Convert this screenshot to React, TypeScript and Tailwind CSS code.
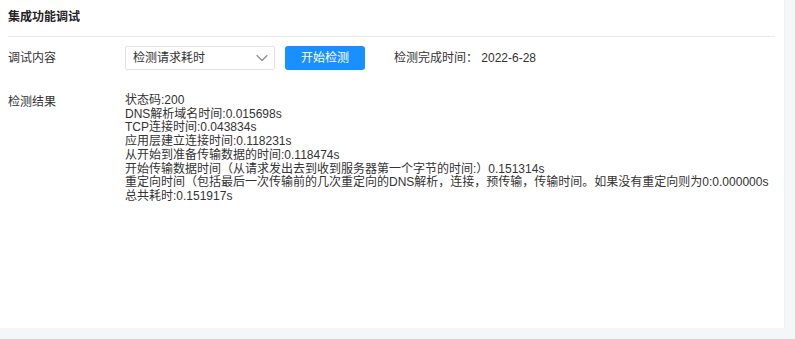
import { ChevronDown } from 'lucide-react';

const results = [
  '状态码:200',
  'DNS解析域名时间:0.015698s',
  'TCP连接时间:0.043834s',
  '应用层建立连接时间:0.118231s',
  '从开始到准备传输数据的时间:0.118474s',
  '开始传输数据时间（从请求发出去到收到服务器第一个字节的时间:）0.151314s',
  '重定向时间（包括最后一次传输前的几次重定向的DNS解析，连接，预传输，传输时间。如果没有重定向则为0:0.000000s',
  '总共耗时:0.151917s',
];

export default function App() {
  return (
    <div
      className="w-[795px] h-[339px] bg-[#f5f6f8] text-[12px] text-[#333]"
      style={{ fontFamily: '"Liberation Sans", "Noto Sans CJK SC", sans-serif' }}
    >
      <div className="w-[785px] h-[328px] bg-white border-r border-[#eef0f3] px-2">
        {/* Header */}
        <div className="h-[37px] flex items-center border-b border-[#e8e8e8] mr-[1px]">
          <span className="font-bold text-[12px] text-[#222] -mt-[2px]">集成功能调试</span>
        </div>

        {/* Debug content row */}
        <div className="flex items-center mt-[9px] h-[24px]">
          <span className="w-[117px]">调试内容</span>
          <div className="w-[150px] h-[24px] border border-[#e3e3e3] rounded-[2px] flex items-center justify-between pl-[7px] pr-[2px]">
            <span>检测请求耗时</span>
            <ChevronDown className="w-[20px] h-[20px] text-[#888]" strokeWidth={1.3} />
          </div>
          <button className="ml-[10px] w-[80px] h-[24px] bg-[#1890ff] text-white rounded-[3px] text-[12px]">
            开始检测
          </button>
          <span className="ml-[29px]">检测完成时间： 2022-6-28</span>
        </div>

        {/* Results */}
        <div className="flex mt-[24px]">
          <span className="w-[117px] leading-[14px] mt-[1px]">检测结果</span>
          <div className="flex flex-col leading-[13.7px]">
            {results.map((r) => (
              <span key={r} className="whitespace-nowrap">{r}</span>
            ))}
          </div>
        </div>
      </div>
    </div>
  );
}
